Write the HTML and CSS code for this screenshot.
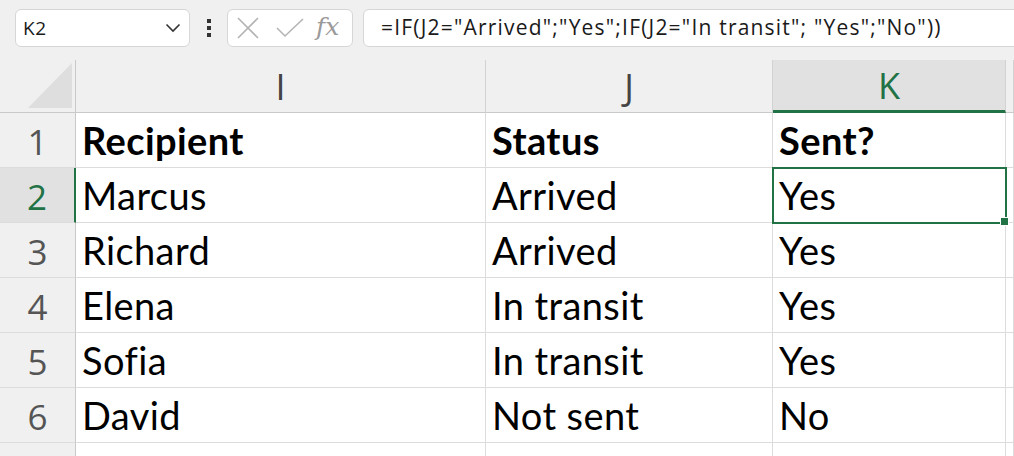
FILE: index.html
```html
<!DOCTYPE html>
<html lang="en">
<head>
    <meta charset="UTF-8">
    <title>Sheet</title>
    <link rel="stylesheet" href="styles.css">
</head>
<body>
    <div class="toolbar">
        <div class="namebox">
            <span>K2</span>
            <svg class="chevron" width="16" height="10" viewBox="0 0 16 10">
                <path d="M1.5 1.5 L8 8 L14.5 1.5" fill="none" stroke="#333" stroke-width="1.6"/>
            </svg>
        </div>
        <div class="kebab"><i></i><i></i><i></i></div>
        <div class="fxbox">
            <svg width="24" height="24" viewBox="0 0 24 24">
                <path d="M2 2 L22 22 M22 2 L2 22" stroke="#b4b4b4" stroke-width="1.6" fill="none"/>
            </svg>
            <svg width="28" height="20" viewBox="0 0 28 20">
                <path d="M1 10 L9 18 L27 1" stroke="#b4b4b4" stroke-width="1.6" fill="none"/>
            </svg>
            <span class="fx">fx</span>
        </div>
        <div class="formula">=IF(J2="Arrived";"Yes";IF(J2="In transit"; "Yes";"No"))</div>
    </div>

    <div class="sheet">
        <div class="corner">
            <svg width="44" height="45" viewBox="0 0 44 45"><path d="M44 0 L44 45 L0 45 Z" fill="#dedede"/></svg>
        </div>
        <div class="colhead">I</div>
        <div class="colhead">J</div>
        <div class="colhead active">K</div>
        <div class="colhead"></div>

        <div class="rowhead">1</div>
        <div class="cell bold">Recipient</div>
        <div class="cell bold">Status</div>
        <div class="cell bold">Sent?</div>
        <div class="cell"></div>

        <div class="rowhead active">2</div>
        <div class="cell">Marcus</div>
        <div class="cell">Arrived</div>
        <div class="cell selected">Yes</div>
        <div class="cell"></div>

        <div class="rowhead">3</div>
        <div class="cell">Richard</div>
        <div class="cell">Arrived</div>
        <div class="cell">Yes</div>
        <div class="cell"></div>

        <div class="rowhead">4</div>
        <div class="cell">Elena</div>
        <div class="cell">In transit</div>
        <div class="cell">Yes</div>
        <div class="cell"></div>

        <div class="rowhead">5</div>
        <div class="cell">Sofia</div>
        <div class="cell">In transit</div>
        <div class="cell">Yes</div>
        <div class="cell"></div>

        <div class="rowhead">6</div>
        <div class="cell">David</div>
        <div class="cell">Not sent</div>
        <div class="cell">No</div>
        <div class="cell"></div>

        <div class="rowhead"></div>
        <div class="cell"></div>
        <div class="cell"></div>
        <div class="cell"></div>
        <div class="cell"></div>
    </div>
</body>
</html>
```

FILE: styles.css
```css
* {
    box-sizing: border-box;
}
body {
    margin: 0;
    background-color: #ffffff;
    font-family: "Open Sans", "Liberation Sans", sans-serif;
    overflow: hidden;
}

/* formula bar */
.toolbar {
    display: flex;
    align-items: center;
    height: 60px;
    padding: 0 0 4px 15px;
    background-color: #f0f0f0;
}
.namebox {
    display: flex;
    align-items: center;
    justify-content: space-between;
    width: 175px;
    height: 38px;
    padding: 0 8px 0 7px;
    background-color: #ffffff;
    border: 1px solid #d6d6d6;
    border-radius: 6px;
    font-size: 19px;
    letter-spacing: 0.5px;
    color: #1a1a1a;
}
.kebab {
    display: flex;
    flex-direction: column;
    gap: 3px;
    width: 37px;
    align-items: center;
}
.kebab i {
    display: block;
    width: 4px;
    height: 4px;
    background-color: #333333;
}
.fxbox {
    display: flex;
    align-items: center;
    gap: 16px;
    width: 126px;
    height: 38px;
    padding-left: 8px;
    background-color: #ffffff;
    border: 1px solid #d6d6d6;
    border-radius: 6px;
}
.fx {
    font-family: "DejaVu Serif", "Liberation Serif", serif;
    font-style: italic;
    font-size: 25px;
    color: #9a9a9a;
    margin-left: -4px;
    margin-top: -3px;
}
.formula {
    flex: 1;
    height: 38px;
    margin-left: 10px;
    margin-right: -10px;
    padding-left: 17px;
    line-height: 35px;
    background-color: #ffffff;
    border: 1px solid #d6d6d6;
    border-radius: 6px;
    font-size: 21px;
    letter-spacing: 1.2px;
    color: #1a1a1a;
    white-space: nowrap;
}

/* grid */
.sheet {
    display: grid;
    grid-template-columns: 76px 410px 287px 233px 1fr;
    grid-template-rows: 53px repeat(7, 55px);
}
.corner {
    display: flex;
    align-items: flex-end;
    justify-content: flex-end;
    padding: 0 3px 4px 0;
    background-color: #f0f0f0;
    border-bottom: 1px solid #c9c9c9;
    border-right: 1px solid #c9c9c9;
}
.colhead {
    display: flex;
    align-items: center;
    justify-content: center;
    background-color: #f0f0f0;
    border-right: 1px solid #d2d2d2;
    border-bottom: 1px solid #c9c9c9;
    font-size: 36px;
    color: #444444;
}
.colhead.active {
    background-color: #e1e1e1;
    border-bottom: 3px solid #217346;
    color: #217346;
}
.rowhead {
    display: flex;
    align-items: center;
    justify-content: center;
    padding-top: 2px;
    background-color: #f0f0f0;
    border-right: 1px solid #c9c9c9;
    border-bottom: 1px solid #dcdcdc;
    font-size: 35px;
    color: #555555;
}
.rowhead.active {
    background-color: #e1e1e1;
    border-right: 2px solid #217346;
    color: #217346;
}
.cell {
    padding-left: 6px;
    border-right: 1px solid #dcdcdc;
    border-bottom: 1px solid #dcdcdc;
    font-family: Lato, "Liberation Sans", sans-serif;
    font-size: 38px;
    letter-spacing: 0.4px;
    line-height: 54px;
    color: #000000;
    white-space: nowrap;
}
.cell.bold {
    font-weight: 700;
}
.cell.selected {
    position: relative;
    outline: 2px solid #217346;
    outline-offset: -1px;
}
.cell.selected::after {
    content: "";
    position: absolute;
    right: -4px;
    bottom: -4px;
    width: 7px;
    height: 7px;
    background-color: #217346;
    border: 1px solid #ffffff;
}
```
